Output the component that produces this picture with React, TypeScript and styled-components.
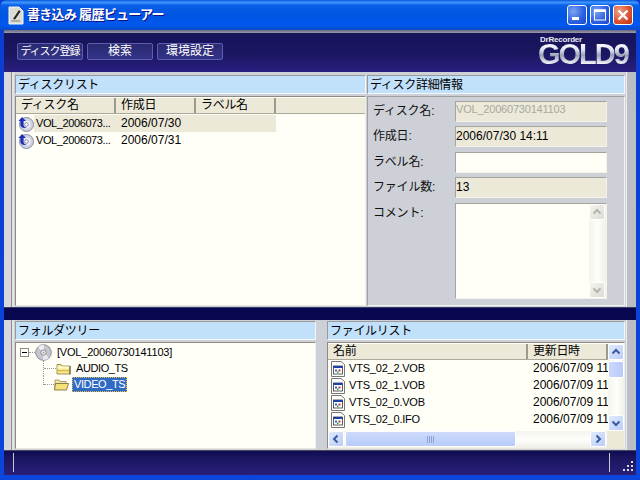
import React from "react";
import styled, { createGlobalStyle } from "styled-components";

const Global = createGlobalStyle`
  html, body { margin: 0; padding: 0; background: #0a3dcc; }
  * { box-sizing: border-box; }
`;

const FONT = `"Liberation Sans", "Noto Sans CJK JP", sans-serif`;
const SIDE_STRIPS = `linear-gradient(90deg, #d8d8dc 0 7px, #8e8e92 7px 8px, #e4e4e4 8px 10px, #cdd0d6 10px calc(100% - 10px), #eeeef0 calc(100% - 10px) calc(100% - 9px), #bcbec6 calc(100% - 9px))`;

const Win = styled.div`
  width: 640px; height: 480px; display: flex; flex-direction: column; overflow: hidden;
  font-family: ${FONT}; font-size: 12px; color: #000;
  background: linear-gradient(180deg, #0a3ed0, #0a46dc);
`;
const TitleBar = styled.div`
  height: 30px; flex: none; display: flex; align-items: center; padding: 0 7px 0 8px;
  border-radius: 7px 7px 0 0;
  background: linear-gradient(180deg, #0a58d8 0%, #3d95ff 8%, #0a5ee6 18%, #0055e3 50%, #0058ee 85%, #0a49c4 100%);
`;
const TitleText = styled.div`
  margin-left: 3px; flex: 1; color: #fff; font-weight: 700; font-size: 13px; line-height: 16px;
  text-shadow: 1px 1px 0 #0f1089; letter-spacing: -0.7px;
`;
const Caption = styled.div<{ $close?: boolean }>`
  width: 20px; height: 20px; margin-left: 3px; border: 1px solid #fff; border-radius: 3px;
  display: flex; align-items: center; justify-content: center;
  background: ${p => p.$close
    ? "radial-gradient(circle at 30% 30%, #f0a088, #d8502c 60%, #c03010)"
    : "radial-gradient(circle at 30% 30%, #7ea4f0, #2a5fe0 60%, #1c48c8)"};
`;
const Frame = styled.div`
  flex: 1; margin: 0 4px 5px; display: flex; flex-direction: column; min-height: 0;
`;
const TopLine = styled.div`
  height: 3px; flex: none; background: linear-gradient(180deg, #6a6a88, #9a9aa4);
`;
const Toolbar = styled.div`
  height: 39px; flex: none; display: flex; align-items: flex-start; padding: 10px 0 0 13px; gap: 4px;
  background: linear-gradient(180deg, #17145a 0%, #1b1660 50%, #2a1e80 100%);
`;
const ToolButton = styled.div<{ $fs: number; $ls: number }>`
  width: 66px; flex: none; height: 17px; line-height: 15px; text-align: center; color: #fff;
  font-size: ${p => p.$fs}px; letter-spacing: ${p => p.$ls}px;
  border: 1px solid #5e5eb0; border-radius: 2px; white-space: nowrap; overflow: hidden;
  background: linear-gradient(180deg, #2a2a70, #33338a);
`;
const Logo = styled.div`
  margin-left: auto; margin-right: 8px; margin-top: -7px; width: 90px; display: flex; flex-direction: column; align-items: flex-start;
`;
const LogoSmall = styled.div`
  font: 700 8px/7px ${FONT}; color: #e8e8f0; margin-left: 2px; letter-spacing: -0.2px; white-space: nowrap;
`;
const LogoBig = styled.div`
  font: 700 29px/22px "Liberation Sans", sans-serif; letter-spacing: -2px; white-space: nowrap; padding-right: 3px;
  background: linear-gradient(180deg, #ffffff 0%, #e0e4f0 30%, #9aa0b8 56%, #ffffff 100%);
  -webkit-background-clip: text; background-clip: text; color: transparent;
`;
const TopRow = styled.div`
  height: 235px; flex: none; display: flex; gap: 1px; padding: 3px 11px 1px;
  background: ${SIDE_STRIPS};
`;
const Splitter = styled.div`
  height: 13px; flex: none; background: #07074f; border-top: 1px solid #3a3a68;
`;
const BottomRow = styled.div`
  height: 130px; flex: none; display: flex; padding: 1px 11px 1px; gap: 11px;
  background: ${SIDE_STRIPS};
`;
const Pane = styled.div<{ $w: number }>`
  width: ${p => p.$w}px; flex: none; display: flex; flex-direction: column; min-height: 0;
`;
const PaneHead = styled.div`
  height: 19px; flex: none; background: #c1e0fa; line-height: 19px; padding-left: 2px; font-size: 12px; letter-spacing: -0.3px;
  border: 1px solid #f4f8fc; border-top-color: #9a9a9a; border-left-color: #9a9a9a;
`;
const ListBody = styled.div`
  flex: 1; min-height: 0; margin-top: 2px; background: #fffff8; border-top: 1px solid #8c8c84; border-left: 1px solid #8c8c84;
  border-right: 1px solid #f0f0e8; border-bottom: 1px solid #e8e8e0; padding-top: 1px; display: flex; flex-direction: column; overflow: hidden;
`;
const HeadRow = styled.div`
  height: 16px; flex: none; display: flex; background: #ece9d8; border-bottom: 1px solid #aca899;
`;
const HeadCell = styled.div<{ $w: number }>`
  width: ${p => p.$w}px; flex: none; padding-left: 5px; line-height: 14px; font-size: 12px; letter-spacing: -0.3px;
  border-right: 2px solid #9c9a8c; white-space: nowrap; overflow: hidden;
`;
const DiscList = styled.div`
  padding-top: 1px; display: flex; flex-direction: column;
`;
const DiscRow = styled.div<{ $on?: boolean }>`
  height: 17px; width: 260px; display: flex; align-items: center; padding-left: 2px; flex: none;
  background: ${p => p.$on ? "linear-gradient(90deg, transparent 18px, #ece9d8 18px)" : "transparent"};
`;
const DiscName = styled.span`
  width: 85px; margin-left: 2px; margin-bottom: 2px; font-size: 11px; letter-spacing: -0.4px; white-space: nowrap; flex: none;
`;
const DateText = styled.span`
  font-size: 12px; margin-bottom: 2px; white-space: nowrap; flex: none;
`;
const DetailBody = styled.div`
  flex: 1; margin-top: 2px; background: #cdd0d6; border: 1px solid #f4f4f4; border-top-color: #a0a0a0; border-left-color: #a0a0a0;
  padding: 4px 17px 0 5px; display: flex; flex-direction: column;
`;
const FieldRow = styled.div<{ $h: number; $gap: number }>`
  height: ${p => p.$h}px; margin-bottom: ${p => p.$gap}px; flex: none; display: flex;
`;
const FieldLabel = styled.div`
  width: 82px; flex: none; font-size: 12px; line-height: 21px; letter-spacing: -0.2px; color: #111;
`;
const Field = styled.div<{ $white?: boolean; $dim?: boolean }>`
  flex: 1; display: flex; background: ${p => p.$white ? "#fffff8" : "#ece9d8"};
  line-height: ${p => p.$dim ? 15 : 19}px; font-size: ${p => p.$dim ? 11 : 12}px;
  letter-spacing: ${p => p.$dim ? -0.2 : 0}px;
  color: ${p => p.$dim ? "#a8a8a0" : "#000"}; white-space: nowrap; overflow: hidden;
  border-top: 1px solid #a4a49c; border-left: 1px solid #a4a49c;
  border-right: 1px solid #f4f4ec; border-bottom: 1px solid #f4f4ec;
`;
const CommentText = styled.div`
  flex: 1;
`;
const VBar = styled.div<{ $w?: number }>`
  width: ${p => p.$w ?? 17}px; flex: none; display: flex; flex-direction: column; justify-content: space-between; position: relative;
  background: linear-gradient(90deg, #f4f3ee, #fefefb, #f0efe8);
`;
const ScrollBtn = styled.div<{ $gray?: boolean }>`
  width: 16px; height: 16px; flex: none; border: 1px solid #fff; border-radius: 2px; display: flex; align-items: center; justify-content: center;
  background: ${p => p.$gray ? "linear-gradient(135deg, #f4f4ee, #dcdcd4)" : "linear-gradient(135deg, #e2ebfd, #b9cdf7)"};
`;
const VThumb = styled.div`
  position: absolute; left: 0; top: 17px; width: 16px; height: 17px; border: 1px solid #fff; border-radius: 2px;
  background: linear-gradient(90deg, #cad8fb, #b8cbf8);
`;
const TreeWrap = styled.div`
  flex: 1; display: flex; flex-direction: column; padding: 0 0 0 4px;
`;
const TreeRoot = styled.div`
  height: 16px; flex: none; display: flex; align-items: center; font-size: 12px;
`;
const Expander = styled.div`
  width: 9px; height: 9px; border: 1px solid #8f8f80; background: #fff; display: flex; align-items: center; justify-content: center; flex: none;
`;
const Minus = styled.div`
  width: 5px; height: 1px; background: #000;
`;
const HDots = styled.div<{ $w: number }>`
  width: ${p => p.$w}px; flex: none; border-top: 1px dotted #999;
`;
const RootLabel = styled.span`
  margin-left: 5px; font-size: 11px; white-space: nowrap; letter-spacing: -0.2px;
`;
const TreeChild = styled.div`
  height: 16px; flex: none; margin-left: 23px; display: flex; align-items: center;
  border-left: 1px dotted #999;
`;
const TreeChildLast = styled(TreeChild)`
  border-left-color: transparent; position: relative;
  &::before { content: ""; position: absolute; left: -1px; top: 0; height: 9px; border-left: 1px dotted #999; }
`;
const NodeLabel = styled.span<{ $sel?: boolean }>`
  margin-left: 3px; padding: 0 2px; height: 15px; line-height: 14px; font-size: 11px; letter-spacing: -0.4px; white-space: nowrap;
  color: ${p => p.$sel ? "#fff" : "#000"}; background: ${p => p.$sel ? "#316ac5" : "transparent"};
  outline: ${p => p.$sel ? "1px dotted #e8c040" : "none"}; outline-offset: -1px;
`;
const FileTop = styled.div`
  height: 87px; flex: none; display: flex;
`;
const FileCol = styled.div`
  width: 280px; flex: none; display: flex; flex-direction: column; overflow: hidden;
`;
const FileRow = styled.div`
  height: 17px; flex: none; display: flex; align-items: center; padding-left: 3px;
`;
const FileName = styled.span`
  width: 184px; margin-left: 4px; margin-bottom: 2px; font-size: 11px; white-space: nowrap; flex: none; letter-spacing: -0.2px;
`;
const HBarRow = styled.div`
  height: 18px; flex: none; display: flex; background: #ece9d8;
`;
const HBar = styled.div`
  width: 279px; height: 17px; display: flex; flex: none; background: linear-gradient(180deg, #f4f3ee, #fefefb, #f0efe8);
`;
const HThumb = styled.div`
  width: 171px; height: 16px; border: 1px solid #fff; border-radius: 2px; display: flex; align-items: center; justify-content: center;
  background: linear-gradient(180deg, #cddafc, #b8cbf8); margin-right: 74px; margin-left: 1px; flex: none;
`;
const StatusBar = styled.div`
  flex: 1; display: flex; align-items: stretch; padding: 2px 0 3px;
  background: linear-gradient(180deg, #0e0c52 0%, #1b1660 30%, #2a1e7a 100%);
  border-top: 1px solid #4a4a60;
`;
const StatusSep = styled.div`
  width: 1px; flex: none; background: #c8c8d0; margin-left: 9px;
`;
const Grow = styled.div`
  flex: 1;
`;
const Grip = styled.div`
  width: 26px; flex: none; display: flex; align-items: flex-end; justify-content: flex-end; padding: 0 2px 0 0;
`;

const DiscUp = () => (
  <svg width="16" height="16" viewBox="0 0 16 16">
    <circle cx="8.5" cy="8.5" r="7" fill="#cfd2e0" stroke="#8a8ea6" />
    <circle cx="8.5" cy="8.5" r="4" fill="#eef0f8" />
    <circle cx="8.5" cy="8.5" r="1.8" fill="#fff" stroke="#70748c" strokeWidth=".8" />
    <path d="M4 1 L8 5 H5.6 V9 C5.6 10.5 7 11.3 9 11.3 C6 13 2.4 11.5 2.4 8.5 V5 H0.4 Z" fill="#1c2fb8" />
  </svg>
);
const Cd = () => (
  <svg width="17" height="17" viewBox="0 0 17 17" style={{ flex: "none" }}>
    <circle cx="8.5" cy="8.5" r="7.8" fill="#c4c6cc" stroke="#8a8c94" />
    <path d="M8.5 8.5 L3 3 A8 8 0 0 1 9 1 Z" fill="#eef0f4" />
    <path d="M8.5 8.5 L14 14 A8 8 0 0 1 8 16 Z" fill="#e6e8ee" />
    <circle cx="8.5" cy="8.5" r="2.6" fill="#f8f8f8" stroke="#777" strokeWidth=".8" />
    <circle cx="8.5" cy="8.5" r="1" fill="#9a9ca4" />
  </svg>
);
const Folder = ({ open }: { open?: boolean }) => (
  <svg width="15" height="13" viewBox="0 0 15 13" style={{ flex: "none" }}>
    {open ? (
      <>
        <path d="M1 2 H5 L6 3.5 H12 V11.5 H1 Z" fill="#f4e6a8" stroke="#9a8a4c" strokeWidth=".8" />
        <path d="M1.5 5.5 H14.5 L12.5 12 H0.5 Z" fill="#f6e27a" stroke="#6e6436" strokeWidth=".8" />
      </>
    ) : (
      <>
        <path d="M1 2.5 H5 L6 4 H14 V12 H1 Z" fill="#f8e690" stroke="#8c7e40" strokeWidth=".8" />
        <rect x="1.5" y="4.5" width="12" height="2" fill="#fff8d0" />
        <rect x="2" y="8" width="11" height="1.2" fill="#d8b840" />
        <rect x="13.5" y="4" width="1" height="8.5" fill="#55522c" />
      </>
    )}
  </svg>
);
const FileIcon = () => (
  <svg width="14" height="16" viewBox="0 0 14 16" style={{ flex: "none" }}>
    <path d="M.5.5 H10 L13.5 3.5 V15.5 H.5 Z" fill="#fff" stroke="#777" />
    <rect x="2.5" y="5" width="9" height="8" fill="#fff" stroke="#333" strokeWidth=".8" />
    <rect x="2.5" y="5" width="9" height="2" fill="#1c3fa8" />
    <rect x="4" y="8.5" width="2" height="2" fill="#2a6ad0" />
    <rect x="7.5" y="8.5" width="2" height="2" fill="#c83c2c" />
    <rect x="6" y="10.5" width="1.5" height="1.5" fill="#2aa040" />
  </svg>
);
const Chev = ({ dir, color }: { dir: "u" | "d" | "l" | "r"; color: string }) => {
  const d = { u: "M1.5 6.5 L5 3 L8.5 6.5", d: "M1.5 3.5 L5 7 L8.5 3.5", l: "M6.5 1.5 L3 5 L6.5 8.5", r: "M3.5 1.5 L7 5 L3.5 8.5" }[dir];
  return (
    <svg width="10" height="10" viewBox="0 0 10 10">
      <path d={d} fill="none" stroke={color} strokeWidth="2" />
    </svg>
  );
};
const AppIcon = () => (
  <svg width="16" height="19" viewBox="0 0 16 19" style={{ flex: "none" }}>
    <path d="M1 1 H11 L15 5 V18 H1 Z" fill="#dcdcd4" stroke="#f4f4f4" />
    <path d="M5 13 L11 4 L12.5 5.5 L7 13.5 Z" fill="#222" />
    <rect x="3" y="14" width="9" height="2" fill="#b0b0a8" />
  </svg>
);
const GripDots = () => (
  <svg width="12" height="12" viewBox="0 0 12 12">
    {[[9, 1], [5, 5], [9, 5], [1, 9], [5, 9], [9, 9]].map(([x, y]) => (
      <rect key={`${x}${y}`} x={x} y={y} width="2" height="2" fill="#d8d8e0" />
    ))}
  </svg>
);

const files = ["VTS_02_2.VOB", "VTS_02_1.VOB", "VTS_02_0.VOB", "VTS_02_0.IFO"];

export default function App() {
  return (
    <Win>
      <Global />
      <TitleBar>
        <AppIcon />
        <TitleText>書き込み 履歴ビューアー</TitleText>
        <Caption>
          <svg width="12" height="12" viewBox="0 0 12 12"><rect x="1" y="8" width="7" height="3" fill="#fff" /></svg>
        </Caption>
        <Caption>
          <svg width="14" height="14" viewBox="0 0 14 14"><rect x="1.5" y="2" width="11" height="10" fill="none" stroke="#fff" /><rect x="1" y="1.5" width="12" height="2.5" fill="#fff" /></svg>
        </Caption>
        <Caption $close>
          <svg width="14" height="14" viewBox="0 0 14 14"><path d="M2.5 2.5 L11.5 11.5 M11.5 2.5 L2.5 11.5" stroke="#fff" strokeWidth="2.4" /></svg>
        </Caption>
      </TitleBar>
      <Frame>
        <TopLine />
        <Toolbar>
          <ToolButton $fs={11} $ls={-1}>ディスク登録</ToolButton>
          <ToolButton $fs={12} $ls={0}>検索</ToolButton>
          <ToolButton $fs={12} $ls={0}>環境設定</ToolButton>
          <Logo>
            <LogoSmall>DrRecorder</LogoSmall>
            <LogoBig>GOLD9</LogoBig>
          </Logo>
        </Toolbar>
        <TopRow>
          <Pane $w={351}>
            <PaneHead>ディスクリスト</PaneHead>
            <ListBody>
              <HeadRow>
                <HeadCell $w={100}>ディスク名</HeadCell>
                <HeadCell $w={80}>作成日</HeadCell>
                <HeadCell $w={80}>ラベル名</HeadCell>
              </HeadRow>
              <DiscList>
                <DiscRow $on><DiscUp /><DiscName>VOL_2006073...</DiscName><DateText>2006/07/30</DateText></DiscRow>
                <DiscRow><DiscUp /><DiscName>VOL_2006073...</DiscName><DateText>2006/07/31</DateText></DiscRow>
              </DiscList>
            </ListBody>
          </Pane>
          <Pane $w={258}>
            <PaneHead>ディスク詳細情報</PaneHead>
            <DetailBody>
              <FieldRow $h={21} $gap={4}><FieldLabel>ディスク名:</FieldLabel><Field $dim>VOL_20060730141103</Field></FieldRow>
              <FieldRow $h={21} $gap={5}><FieldLabel>作成日:</FieldLabel><Field>2006/07/30 14:11</Field></FieldRow>
              <FieldRow $h={21} $gap={4}><FieldLabel>ラベル名:</FieldLabel><Field $white /></FieldRow>
              <FieldRow $h={21} $gap={5}><FieldLabel>ファイル数:</FieldLabel><Field>13</Field></FieldRow>
              <FieldRow $h={96} $gap={0}>
                <FieldLabel>コメント:</FieldLabel>
                <Field $white>
                  <CommentText />
                  <VBar>
                    <ScrollBtn $gray><Chev dir="u" color="#b4b4ac" /></ScrollBtn>
                    <ScrollBtn $gray><Chev dir="d" color="#b4b4ac" /></ScrollBtn>
                  </VBar>
                </Field>
              </FieldRow>
            </DetailBody>
          </Pane>
        </TopRow>
        <Splitter />
        <BottomRow>
          <Pane $w={301}>
            <PaneHead>フォルダツリー</PaneHead>
            <ListBody>
              <TreeWrap>
                <TreeRoot>
                  <Expander><Minus /></Expander>
                  <HDots $w={6} />
                  <Cd />
                  <RootLabel>[VOL_20060730141103]</RootLabel>
                </TreeRoot>
                <TreeChild><HDots $w={12} /><Folder /><NodeLabel>AUDIO_TS</NodeLabel></TreeChild>
                <TreeChildLast><HDots $w={10} /><Folder open /><NodeLabel $sel>VIDEO_TS</NodeLabel></TreeChildLast>
              </TreeWrap>
            </ListBody>
          </Pane>
          <Pane $w={298}>
            <PaneHead>ファイルリスト</PaneHead>
            <ListBody>
              <FileTop>
                <FileCol>
                  <HeadRow>
                    <HeadCell $w={200}>名前</HeadCell>
                    <HeadCell $w={80}>更新日時</HeadCell>
                  </HeadRow>
                  {files.map(f => (
                    <FileRow key={f}><FileIcon /><FileName>{f}</FileName><DateText>2006/07/09 11</DateText></FileRow>
                  ))}
                </FileCol>
                <VBar>
                  <ScrollBtn><Chev dir="u" color="#3c5a9c" /></ScrollBtn>
                  <VThumb />
                  <ScrollBtn><Chev dir="d" color="#3c5a9c" /></ScrollBtn>
                </VBar>
              </FileTop>
              <HBarRow>
                <HBar>
                  <ScrollBtn><Chev dir="l" color="#3c5a9c" /></ScrollBtn>
                  <HThumb>
                    <svg width="8" height="7" viewBox="0 0 8 7"><path d="M.5 0V7M2.5 0V7M4.5 0V7M6.5 0V7" stroke="#8aa2d8" /></svg>
                  </HThumb>
                  <ScrollBtn><Chev dir="r" color="#3c5a9c" /></ScrollBtn>
                </HBar>
              </HBarRow>
            </ListBody>
          </Pane>
        </BottomRow>
        <StatusBar>
          <StatusSep />
          <Grow />
          <StatusSep />
          <Grip><GripDots /></Grip>
        </StatusBar>
      </Frame>
    </Win>
  );
}
